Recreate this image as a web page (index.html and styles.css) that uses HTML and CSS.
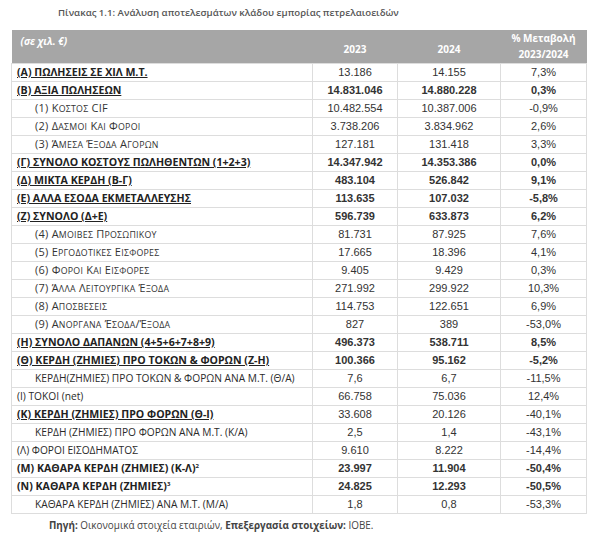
FILE: index.html
```html
<!DOCTYPE html>
<html lang="el">
<head>
<meta charset="utf-8">
<link rel="stylesheet" href="styles.css">
</head>
<body>
<div class="page">
  <div class="title">Πίνακας 1.1: Ανάλυση αποτελεσμάτων κλάδου εμπορίας πετρελαιοειδών</div>
  <table class="tbl">
    <colgroup><col class="c1"><col class="c2"><col class="c3"><col class="c4"></colgroup>
    <thead>
      <tr>
        <th class="unit">(σε χιλ. €)</th>
        <th class="yr">2023</th>
        <th class="yr">2024</th>
        <th class="chg"><span>% Μεταβολή</span><span>2023/2024</span></th>
      </tr>
    </thead>
    <tbody>
      <tr class="b u"><td>(Α) ΠΩΛΗΣΕΙΣ ΣΕ ΧΙΛ Μ.Τ.</td><td class="n nb">13.186</td><td class="n nb">14.155</td><td class="n nb">7,3%</td></tr>
      <tr class="b u"><td>(Β) ΑΞΙΑ ΠΩΛΗΣΕΩΝ</td><td class="n">14.831.046</td><td class="n">14.880.228</td><td class="n">0,3%</td></tr>
      <tr class="sc"><td>(1) Κ<span class="sm">οστος</span> CIF</td><td class="n">10.482.554</td><td class="n">10.387.006</td><td class="n">-0,9%</td></tr>
      <tr class="sc"><td>(2) Δ<span class="sm">ασμοι</span> Κ<span class="sm">αι</span> Φ<span class="sm">οροι</span></td><td class="n">3.738.206</td><td class="n">3.834.962</td><td class="n">2,6%</td></tr>
      <tr class="sc"><td>(3) Ά<span class="sm">μεσα</span> Έ<span class="sm">ξοδα</span> Α<span class="sm">γορων</span></td><td class="n">127.181</td><td class="n">131.418</td><td class="n">3,3%</td></tr>
      <tr class="b u"><td>(Γ) ΣΥΝΟΛΟ ΚΟΣΤΟΥΣ ΠΩΛΗΘΕΝΤΩΝ (1+2+3)</td><td class="n">14.347.942</td><td class="n">14.353.386</td><td class="n">0,0%</td></tr>
      <tr class="b u"><td>(Δ) ΜΙΚΤΑ ΚΕΡΔΗ (Β-Γ)</td><td class="n">483.104</td><td class="n">526.842</td><td class="n">9,1%</td></tr>
      <tr class="b u"><td>(Ε) ΑΛΛΑ ΕΣΟΔΑ ΕΚΜΕΤΑΛΛΕΥΣΗΣ</td><td class="n">113.635</td><td class="n">107.032</td><td class="n">-5,8%</td></tr>
      <tr class="b u"><td>(Ζ) ΣΥΝΟΛΟ (Δ+Ε)</td><td class="n">596.739</td><td class="n">633.873</td><td class="n">6,2%</td></tr>
      <tr class="sc"><td>(4) Α<span class="sm">μοιβες</span> Π<span class="sm">ροσωπικου</span></td><td class="n">81.731</td><td class="n">87.925</td><td class="n">7,6%</td></tr>
      <tr class="sc"><td>(5) Ε<span class="sm">ργοδοτικες</span> Ε<span class="sm">ισφορες</span></td><td class="n">17.665</td><td class="n">18.396</td><td class="n">4,1%</td></tr>
      <tr class="sc"><td>(6) Φ<span class="sm">οροι</span> Κ<span class="sm">αι</span> Ε<span class="sm">ισφορες</span></td><td class="n">9.405</td><td class="n">9.429</td><td class="n">0,3%</td></tr>
      <tr class="sc"><td>(7) Ά<span class="sm">λλα</span> Λ<span class="sm">ειτουργικα</span> Έ<span class="sm">ξοδα</span></td><td class="n">271.992</td><td class="n">299.922</td><td class="n">10,3%</td></tr>
      <tr class="sc"><td>(8) Α<span class="sm">ποσβεσεις</span></td><td class="n">114.753</td><td class="n">122.651</td><td class="n">6,9%</td></tr>
      <tr class="sc"><td>(9) Α<span class="sm">νοργανα</span> Έ<span class="sm">σοδα</span>/Έ<span class="sm">ξοδα</span></td><td class="n">827</td><td class="n">389</td><td class="n">-53,0%</td></tr>
      <tr class="b u"><td>(Η) ΣΥΝΟΛΟ ΔΑΠΑΝΩΝ (4+5+6+7+8+9)</td><td class="n">496.373</td><td class="n">538.711</td><td class="n">8,5%</td></tr>
      <tr class="b u"><td>(Θ) ΚΕΡΔΗ (ΖΗΜΙΕΣ) ΠΡΟ ΤΟΚΩΝ &amp; ΦΟΡΩΝ (Ζ-Η)</td><td class="n">100.366</td><td class="n">95.162</td><td class="n">-5,2%</td></tr>
      <tr class="ind"><td>ΚΕΡΔΗ(ΖΗΜΙΕΣ) ΠΡΟ ΤΟΚΩΝ &amp; ΦΟΡΩΝ ΑΝΑ Μ.Τ. (Θ/Α)</td><td class="n">7,6</td><td class="n">6,7</td><td class="n">-11,5%</td></tr>
      <tr><td>(Ι) ΤΟΚΟΙ (net)</td><td class="n">66.758</td><td class="n">75.036</td><td class="n">12,4%</td></tr>
      <tr class="b u"><td>(Κ) ΚΕΡΔΗ (ΖΗΜΙΕΣ) ΠΡΟ ΦΟΡΩΝ (Θ-Ι)</td><td class="n nb">33.608</td><td class="n nb">20.126</td><td class="n nb">-40,1%</td></tr>
      <tr class="ind"><td>ΚΕΡΔΗ (ΖΗΜΙΕΣ) ΠΡΟ ΦΟΡΩΝ ΑΝΑ Μ.Τ. (Κ/Α)</td><td class="n">2,5</td><td class="n">1,4</td><td class="n">-43,1%</td></tr>
      <tr><td>(Λ) ΦΟΡΟΙ ΕΙΣΟΔΗΜΑΤΟΣ</td><td class="n">9.610</td><td class="n">8.222</td><td class="n">-14,4%</td></tr>
      <tr class="b"><td>(Μ) ΚΑΘΑΡΑ ΚΕΡΔΗ (ΖΗΜΙΕΣ) (Κ-Λ)<sup>2</sup></td><td class="n">23.997</td><td class="n">11.904</td><td class="n">-50,4%</td></tr>
      <tr class="b"><td>(Ν) ΚΑΘΑΡΑ ΚΕΡΔΗ (ΖΗΜΙΕΣ)<sup>3</sup></td><td class="n">24.825</td><td class="n">12.293</td><td class="n">-50,5%</td></tr>
      <tr class="ind"><td>ΚΑΘΑΡΑ ΚΕΡΔΗ (ΖΗΜΙΕΣ) ΑΝΑ Μ.Τ. (Μ/Α)</td><td class="n">1,8</td><td class="n">0,8</td><td class="n">-53,3%</td></tr>
    </tbody>
  </table>
  <div class="source"><b>Πηγή:</b> Οικονομικά στοιχεία εταιριών, <b>Επεξεργασία στοιχείων:</b> ΙΟΒΕ.</div>
</div>
</body>
</html>
```

FILE: styles.css
```css
html, body {
  margin: 0;
  padding: 0;
  background: #ffffff;
}
.page {
  width: 600px;
  height: 536px;
  padding: 6px 14px 0 11px;
  box-sizing: border-box;
  font-family: "Open Sans", "Noto Sans", sans-serif;
  color: #333333;
  overflow: hidden;
}
.title {
  font-weight: 600;
  font-size: 9.6px;
  color: #555555;
  padding-left: 47px;
  height: 24px;
  line-height: 14px;
}
.tbl {
  width: 575px;
  border-collapse: collapse;
  table-layout: fixed;
}
.c1 { width: 301px; }
.c2 { width: 85px; }
.c3 { width: 103px; }
.c4 { width: 86px; }
thead tr { height: 33px; }
thead th {
  background: #a6a6a6;
  color: #ffffff;
  font-weight: 700;
  padding: 0;
  font-size: 10px;
  line-height: 14px;
}
th.unit {
  text-align: left;
  vertical-align: top;
  font-style: italic;
  padding: 4px 0 0 9px;
}
th.yr {
  vertical-align: bottom;
  padding-bottom: 7px;
}
th.chg {
  vertical-align: middle;
}
th.chg span {
  display: block;
  line-height: 16px;
}
tbody tr { height: 18px; }
tbody td {
  padding: 0 0 0 5px;
  border: 1px solid #dddddd;
  font-size: 10.2px;
  line-height: 12px;
  white-space: nowrap;
  overflow: hidden;
  color: #2a2a2a;
}
tbody td.n {
  padding: 0;
  text-align: center;
  font-family: "Liberation Sans", Arial, sans-serif;
  font-size: 11px;
  color: #333333;
}
tbody tr.b td:first-child {
  font-weight: 700;
  font-size: 10.6px;
  color: #222222;
}
tbody tr.b td.n { font-weight: 700; }
tbody tr.b td.nb { font-weight: 400; }
tbody tr.u td:first-child { text-decoration: underline; }
tbody tr.sc td:first-child {
  padding-left: 23px;
  font-size: 11px;
  letter-spacing: 0.25px;
  color: #333333;
}
.sm {
  text-transform: uppercase;
  font-size: 0.8em;
}
tbody tr.ind td:first-child { padding-left: 23px; }
sup {
  font-size: 6px;
  line-height: 0;
  vertical-align: 4px;
}
.source {
  font-size: 9.9px;
  line-height: 14px;
  color: #444444;
  margin-top: 4px;
  padding-left: 38px;
}
```
